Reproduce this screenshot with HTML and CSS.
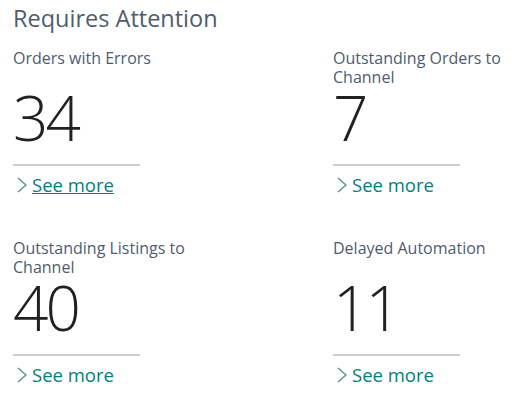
FILE: index.html
```html
<!DOCTYPE html>
<html lang="en">
<head>
    <meta charset="UTF-8">
    <title>Requires Attention</title>
    <link rel="stylesheet" href="styles.css">
</head>
<body>

<div class="cue-group">
    <h2 class="group-title">Requires Attention</h2>
    <div class="cue-grid">
        <div class="cue">
            <div class="cue-label">Orders with Errors</div>
            <div class="cue-value">34</div>
            <a class="see-more focused" href="#"><svg class="chevron" width="12" height="16" viewBox="0 0 12 16"><polyline points="2,1 10,8 2,15" /></svg><span>See more</span></a>
        </div>
        <div class="cue">
            <div class="cue-label">Outstanding Orders to Channel</div>
            <div class="cue-value">7</div>
            <a class="see-more" href="#"><svg class="chevron" width="12" height="16" viewBox="0 0 12 16"><polyline points="2,1 10,8 2,15" /></svg><span>See more</span></a>
        </div>
        <div class="cue">
            <div class="cue-label">Outstanding Listings to Channel</div>
            <div class="cue-value">40</div>
            <a class="see-more" href="#"><svg class="chevron" width="12" height="16" viewBox="0 0 12 16"><polyline points="2,1 10,8 2,15" /></svg><span>See more</span></a>
        </div>
        <div class="cue">
            <div class="cue-label">Delayed Automation</div>
            <div class="cue-value">11</div>
            <a class="see-more" href="#"><svg class="chevron" width="12" height="16" viewBox="0 0 12 16"><polyline points="2,1 10,8 2,15" /></svg><span>See more</span></a>
        </div>
    </div>
</div>

</body>
</html>
```

FILE: styles.css
```css
body {
    font-family: "Open Sans", "Noto Sans", sans-serif;
    background-color: #ffffff;
    margin: 0;
}
.cue-group {
    padding: 0 13px;
}
.group-title {
    font-size: 23.5px;
    font-weight: 400;
    color: #505c6d;
    margin: 0;
    line-height: 36px;
}
.cue-grid {
    display: grid;
    grid-template-columns: 320px 184px;
    row-gap: 42px;
    margin-top: 13px;
}
.cue {
    width: 184px;
}
.cue-label {
    font-size: 16px;
    line-height: 19px;
    color: #505c6d;
    height: 38px;
}
.cue-value {
    font-size: 62px;
    font-weight: 300;
    letter-spacing: -3px;
    color: #212121;
    line-height: 60px;
    width: 127px;
    padding-bottom: 17px;
    border-bottom: 2px solid #cdcdcd;
}
.see-more {
    display: flex;
    align-items: center;
    margin-top: 6px;
    font-size: 18.5px;
    color: #00807d;
    text-decoration: none;
}
.see-more.focused span {
    text-decoration: underline;
}
.chevron {
    margin: 0 4px 0 3px;
    fill: none;
    stroke: #4f8e8a;
    stroke-width: 1.3;
}
```
